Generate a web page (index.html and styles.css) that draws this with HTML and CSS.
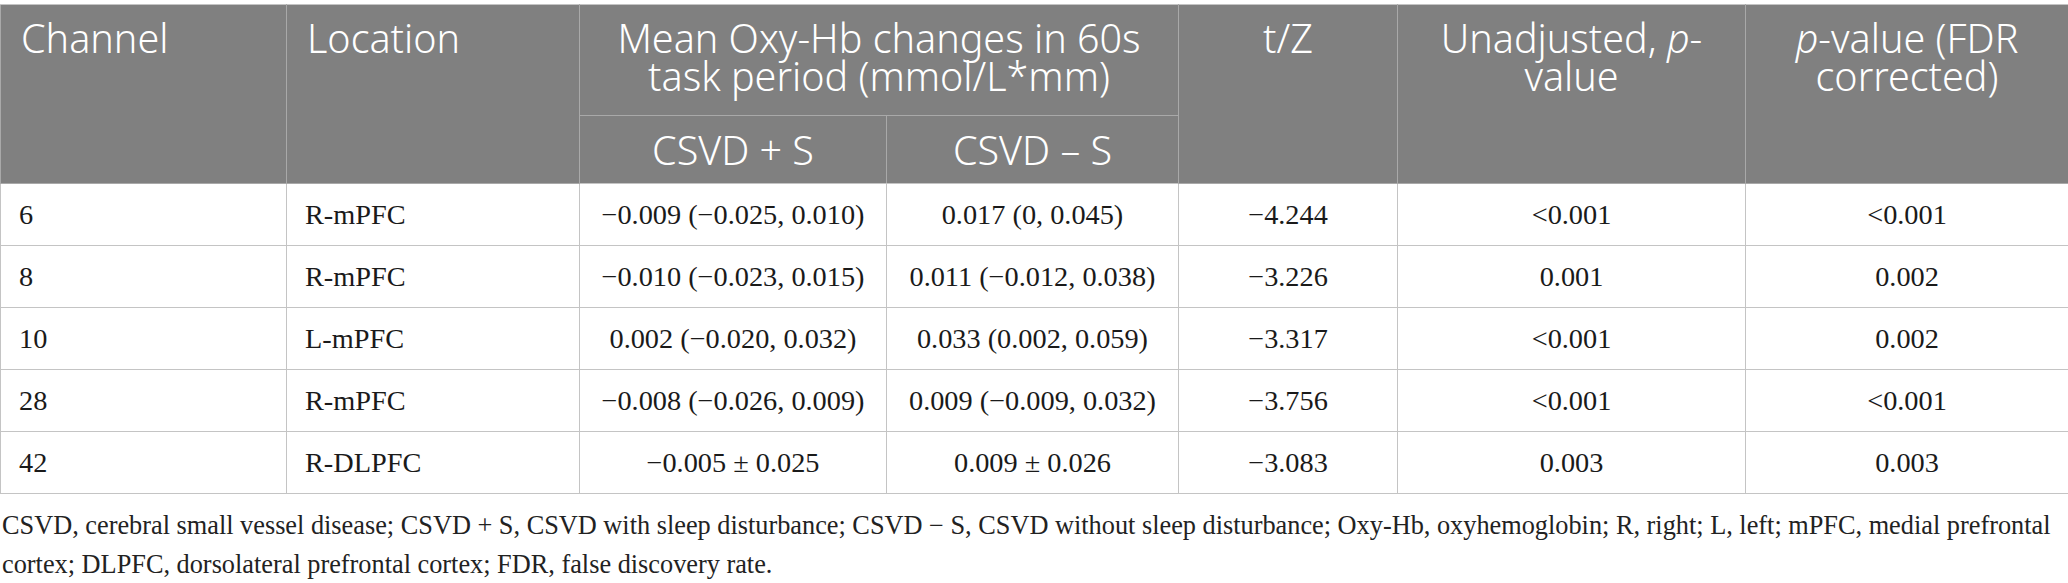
FILE: index.html
```html
<!DOCTYPE html>
<html lang="en">
<head>
<meta charset="utf-8">
<title>Table</title>
<link rel="stylesheet" href="styles.css">
</head>
<body>
<table class="data">
  <colgroup>
    <col class="c1"><col class="c2"><col class="c3"><col class="c4"><col class="c5"><col class="c6"><col class="c7">
  </colgroup>
  <thead>
    <tr class="h1">
      <th rowspan="2" class="left">Channel</th>
      <th rowspan="2" class="left">Location</th>
      <th colspan="2">Mean Oxy-Hb changes in 60s task period (mmol/L*mm)</th>
      <th rowspan="2">t/Z</th>
      <th rowspan="2">Unadjusted, <i>p</i>-value</th>
      <th rowspan="2"><i>p</i>-value (FDR corrected)</th>
    </tr>
    <tr class="h2">
      <th class="sub">CSVD + S</th>
      <th class="sub">CSVD – S</th>
    </tr>
  </thead>
  <tbody>
    <tr><td class="left">6</td><td class="left">R-mPFC</td><td>−0.009 (−0.025, 0.010)</td><td>0.017 (0, 0.045)</td><td>−4.244</td><td>&lt;0.001</td><td>&lt;0.001</td></tr>
    <tr><td class="left">8</td><td class="left">R-mPFC</td><td>−0.010 (−0.023, 0.015)</td><td>0.011 (−0.012, 0.038)</td><td>−3.226</td><td>0.001</td><td>0.002</td></tr>
    <tr><td class="left">10</td><td class="left">L-mPFC</td><td>0.002 (−0.020, 0.032)</td><td>0.033 (0.002, 0.059)</td><td>−3.317</td><td>&lt;0.001</td><td>0.002</td></tr>
    <tr><td class="left">28</td><td class="left">R-mPFC</td><td>−0.008 (−0.026, 0.009)</td><td>0.009 (−0.009, 0.032)</td><td>−3.756</td><td>&lt;0.001</td><td>&lt;0.001</td></tr>
    <tr><td class="left">42</td><td class="left">R-DLPFC</td><td>−0.005 ± 0.025</td><td>0.009 ± 0.026</td><td>−3.083</td><td>0.003</td><td>0.003</td></tr>
  </tbody>
</table>
<p class="note">CSVD, cerebral small vessel disease; CSVD + S, CSVD with sleep disturbance; CSVD − S, CSVD without sleep disturbance; Oxy-Hb, oxyhemoglobin; R, right; L, left; mPFC, medial prefrontal cortex; DLPFC, dorsolateral prefrontal cortex; FDR, false discovery rate.</p>
</body>
</html>
```
FILE: styles.css
```css
html, body {
  margin: 0;
  padding: 0;
  background: #ffffff;
}
body {
  padding-top: 4px;
  width: 2068px;
}
.data {
  width: 2068px;
  border-collapse: collapse;
  table-layout: fixed;
}
.c1 { width: 286px; }
.c2 { width: 293px; }
.c3 { width: 307px; }
.c4 { width: 292px; }
.c5 { width: 219px; }
.c6 { width: 348px; }
.c7 { width: 323px; }

.data th {
  background: #808080;
  color: #ffffff;
  font-family: "Noto Sans", "Open Sans", sans-serif;
  font-weight: 300;
  font-size: 39.5px;
  line-height: 38px;
  text-align: center;
  vertical-align: top;
  padding: 14px 16px 0 16px;
  border: 1px solid #a9a9a9;
  border-top-color: #c4c4c4;
}
.data th.left {
  text-align: left;
  padding-left: 20px;
}
.data th.sub {
  vertical-align: middle;
  padding-top: 0;
}
.h1 { height: 111px; }
.h2 { height: 68px; }

.data tbody tr { height: 62px; }
.data td {
  font-family: "Liberation Serif", "Times New Roman", serif;
  font-size: 28.3px;
  line-height: 32px;
  color: #1a1a1a;
  text-align: center;
  vertical-align: middle;
  padding: 0 10px;
  border: 1px solid #c4c4c4;
  white-space: nowrap;
}
.data td.left {
  text-align: left;
  padding-left: 18px;
}
.data thead tr:last-child th { border-bottom-color: #c4c4c4; }

.note {
  margin: 12px 0 0 0;
  padding-left: 2px;
  font-family: "Liberation Serif", "Times New Roman", serif;
  font-size: 26.3px;
  line-height: 39px;
  color: #222222;
}
```
